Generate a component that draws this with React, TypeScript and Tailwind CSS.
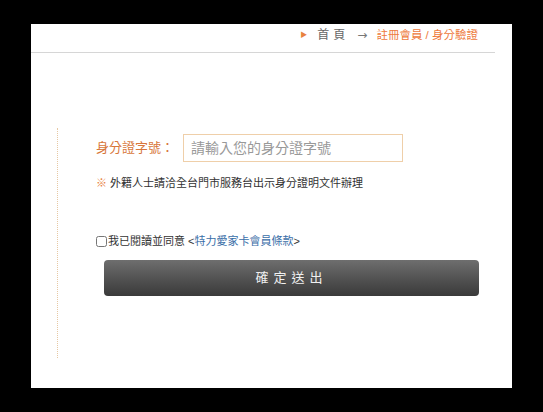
export default function App() {
  return (
    <div
      className="h-[412px] w-[543px] overflow-hidden bg-black pl-[31px] pt-[24px]"
      style={{ fontFamily: '"Liberation Sans", "Noto Sans CJK TC", sans-serif' }}
    >
      <div className="flex h-[364px] w-[481px] flex-col bg-white">
        <div className="mr-[17px] flex h-[29px] items-start justify-end border-b border-[#d6d6d6] pr-[17px] pt-[3px] text-[12px] leading-[16px]">
          <span className="mr-[10px] text-[7px] leading-[16px] text-[#e8823e]">▶</span>
          <span className="tracking-[4px] text-[#666]">首頁</span>
          <span className="ml-[8px] mr-[9px] text-[#777]" style={{ fontFamily: '"DejaVu Sans", sans-serif' }}>
            →
          </span>
          <span className="text-[11.5px] text-[#ee7a3c]">註冊會員 / 身分驗證</span>
        </div>

        <div className="ml-[26px] mt-[75px] h-[230px] border-l border-dotted border-[#e6c8a4] pl-[38px] pt-[6px]">
          <div className="flex items-center">
            <label className="mr-[9px] shrink-0 whitespace-nowrap text-[13px] text-[#d8773b]">
              身分證字號：
            </label>
            <input
              type="text"
              placeholder="請輸入您的身分證字號"
              className="h-[28px] w-[220px] border border-[#efcfa9] px-[7px] text-[14px] text-[#333] placeholder:text-[#999] outline-none"
            />
          </div>

          <p className="mt-[13px] text-[11px] leading-[16px] text-[#333]">
            <span className="text-[#e8823e]">※</span> 外籍人士請洽全台門市服務台出示身分證明文件辦理
          </p>

          <div className="mt-[43px] flex items-center text-[11px] leading-[14px] text-[#333]">
            <input type="checkbox" className="m-0 mr-[1px] h-[11px] w-[11px]" />
            <span>
              我已閱讀並同意 &lt;<a className="text-[#3a6ea8]">特力愛家卡會員條款</a>&gt;
            </span>
          </div>

          <button
            type="button"
            className="ml-[8px] mt-[12px] h-[36px] w-[375px] rounded-[4px] bg-gradient-to-b from-[#6e6e6e] to-[#3a3a3a] text-[13px] tracking-[5px] text-[#f0f0f0]"
          >
            確定送出
          </button>
        </div>
      </div>
    </div>
  );
}
